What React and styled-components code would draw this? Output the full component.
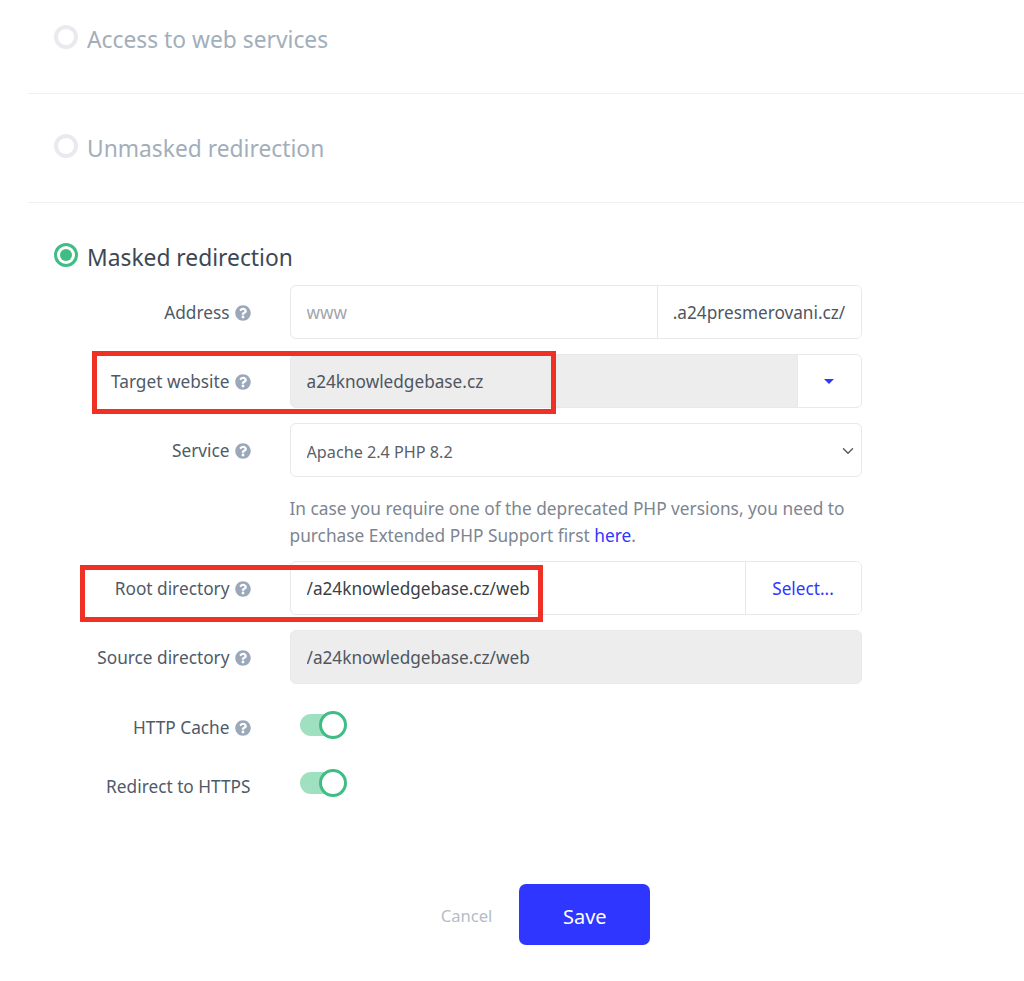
import React from 'react'
import styled, { createGlobalStyle } from 'styled-components'
import { FaQuestionCircle } from 'react-icons/fa'
import { ChevronDown } from 'lucide-react'

const GlobalStyle = createGlobalStyle`
  html, body {
    margin: 0;
    background: #fff;
    font-family: "Noto Sans", "Open Sans", sans-serif;
    color: #4a5462;
  }
`

const Page = styled.div`
  position: relative;
  width: 1024px;
  height: 981px;
  overflow: hidden;
  box-sizing: border-box;
  padding-left: 28px;
`

const Section = styled.section`
  height: ${p => p.$height}px;
  padding-left: 26px;
  box-sizing: border-box;
  border-bottom: ${p => (p.$last ? 'none' : '1px solid #edeff2')};
`

const SectionHead = styled.div`
  display: flex;
  align-items: flex-start;
  gap: 9px;
  padding-top: ${p => p.$top}px;
`

const Radio = styled.span`
  width: 24px;
  height: 24px;
  box-sizing: border-box;
  border-radius: 50%;
  border: ${p => (p.$on ? '3px solid #3fbd85' : '4px solid #e8eaef')};
  background: #fff;
  display: flex;
  align-items: center;
  justify-content: center;
  &::after {
    content: '';
    display: ${p => (p.$on ? 'block' : 'none')};
    width: 12px;
    height: 12px;
    border-radius: 50%;
    background: #3fbd85;
  }
`

const SectionTitle = styled.span`
  font-size: 22.8px;
  line-height: 30px;
  color: ${p => (p.$on ? '#3d4856' : '#a3aebb')};
`

const Form = styled.div`
  margin-top: 12px;
  margin-left: -26px;
  display: flex;
  flex-direction: column;
`

const Row = styled.div`
  display: grid;
  grid-template-columns: 222.5px 572px;
  column-gap: 39px;
  align-items: center;
  min-height: 53.5px;
  margin-bottom: ${p => p.$gap ?? 15.5}px;
`

const Label = styled.label`
  display: flex;
  align-items: center;
  justify-content: flex-end;
  gap: 5px;
  padding-top: 2px;
  font-size: 17.25px;
  color: #4f5a68;
  white-space: nowrap;
  svg {
    width: 16px;
    height: 16px;
    color: #9ba8b9;
  }
`

const Group = styled.div`
  display: flex;
  height: 53.5px;
  box-sizing: border-box;
  border: 1px solid #e6e8eb;
  border-radius: 6px;
  overflow: hidden;
  background: ${p => (p.$disabled ? '#ededed' : '#fff')};
`

const Input = styled.input`
  flex: 1;
  min-width: 0;
  border: none;
  outline: none;
  background: transparent;
  padding: 2px 16px 0;
  font: inherit;
  font-size: 17.2px;
  color: ${p => p.$color || '#4f5660'};
  &::placeholder {
    color: #a2a6ab;
  }
`

const Addon = styled.span`
  display: flex;
  align-items: center;
  justify-content: center;
  width: ${p => p.$width}px;
  box-sizing: border-box;
  padding-top: 2px;
  border-left: 1px solid #e6e8eb;
  background: #fff;
  font-size: 17.2px;
  color: ${p => p.$color || '#4f5660'};
`

const Caret = styled.span`
  width: 0;
  height: 0;
  border-left: 5px solid transparent;
  border-right: 5px solid transparent;
  border-top: 5px solid #2e36ff;
`

const SelectWrap = styled.div`
  position: relative;
  svg {
    position: absolute;
    top: 19px;
    right: 5px;
    color: #5a5f66;
    pointer-events: none;
  }
`

const Select = styled.select`
  display: block;
  width: 100%;
  height: 53.5px;
  box-sizing: border-box;
  appearance: none;
  border: 1px solid #e6e8eb;
  border-radius: 6px;
  background: #fff;
  padding: 4px 16px 0;
  font: inherit;
  font-size: 16.2px;
  color: #5a6069;
  outline: none;
`

const Help = styled.p`
  grid-column: 2;
  margin: 1px 0 0;
  font-size: 17.3px;
  line-height: 27px;
  color: #7d8590;
  a {
    color: #2e36ff;
    text-decoration: none;
  }
`

const Toggle = styled.span`
  position: relative;
  display: block;
  width: 40px;
  height: 22px;
  margin-left: 10.5px;
  margin-bottom: 4px;
  border-radius: 11px;
  background: #9fe0c0;
  &::after {
    content: '';
    position: absolute;
    top: -3px;
    left: 19px;
    width: 28px;
    height: 28px;
    box-sizing: border-box;
    border-radius: 50%;
    border: 3px solid #3fbd85;
    background: #fff;
  }
`

const Actions = styled.div`
  display: flex;
  align-items: center;
  justify-content: center;
  gap: 27px;
  width: 1035px;
  margin-top: 72px;
  margin-left: -26px;
`

const Cancel = styled.a`
  padding-top: 2px;
  font-size: 16.6px;
  color: #b5bdc7;
`

const Save = styled.button`
  width: 131px;
  height: 61px;
  padding: 3px 0 0;
  border: none;
  border-radius: 7px;
  background: #2e36ff;
  color: #fff;
  font: inherit;
  font-size: 20px;
`

// red annotation boxes drawn over the screenshot
const Mark = styled.div`
  position: absolute;
  left: ${p => p.$x}px;
  top: ${p => p.$y}px;
  width: ${p => p.$w}px;
  height: ${p => p.$h}px;
  box-sizing: border-box;
  border: 5px solid #ee3124;
  pointer-events: none;
`

const FieldLabel = ({ children, help = true }) => (
  <Label>
    {children}
    {help && <FaQuestionCircle />}
  </Label>
)

export default function App() {
  return (
    <Page>
      <GlobalStyle />
      <Section $height={94}>
        <SectionHead $top={25}>
          <Radio />
          <SectionTitle>Access to web services</SectionTitle>
        </SectionHead>
      </Section>
      <Section $height={109}>
        <SectionHead $top={40}>
          <Radio />
          <SectionTitle>Unmasked redirection</SectionTitle>
        </SectionHead>
      </Section>
      <Section $last $height={778}>
        <SectionHead $top={40}>
          <Radio $on />
          <SectionTitle $on>Masked redirection</SectionTitle>
        </SectionHead>
        <Form>
          <Row>
            <FieldLabel>Address</FieldLabel>
            <Group>
              <Input placeholder="www" />
              <Addon $width={204}>.a24presmerovani.cz/</Addon>
            </Group>
          </Row>
          <Row>
            <FieldLabel>Target website</FieldLabel>
            <Group $disabled>
              <Input readOnly value="a24knowledgebase.cz" />
              <Addon $width={64}><Caret /></Addon>
            </Group>
          </Row>
          <Row $gap={17}>
            <FieldLabel>Service</FieldLabel>
            <SelectWrap>
              <Select defaultValue="php82">
                <option value="php82">Apache 2.4 PHP 8.2</option>
              </Select>
              <ChevronDown size={18} strokeWidth={2} />
            </SelectWrap>
          </Row>
          <Row $gap={12.5}>
            <Help>
              In case you require one of the deprecated PHP versions, you need to purchase Extended PHP Support first <a href="#here">here</a>.
            </Help>
          </Row>
          <Row>
            <FieldLabel>Root directory</FieldLabel>
            <Group>
              <Input readOnly $color="#3a3f47" value="/a24knowledgebase.cz/web" />
              <Addon $width={116} $color="#2e36ff">Select...</Addon>
            </Group>
          </Row>
          <Row $gap={16.5}>
            <FieldLabel>Source directory</FieldLabel>
            <Group $disabled>
              <Input readOnly value="/a24knowledgebase.cz/web" />
            </Group>
          </Row>
          <Row $gap={5}>
            <FieldLabel>HTTP Cache</FieldLabel>
            <Toggle />
          </Row>
          <Row $gap={0}>
            <FieldLabel help={false}>Redirect to HTTPS</FieldLabel>
            <Toggle />
          </Row>
        </Form>
        <Actions>
          <Cancel>Cancel</Cancel>
          <Save>Save</Save>
        </Actions>
      </Section>
      <Mark $x={92} $y={351} $w={464} $h={63} />
      <Mark $x={80} $y={565} $w={463} $h={57} />
    </Page>
  )
}
